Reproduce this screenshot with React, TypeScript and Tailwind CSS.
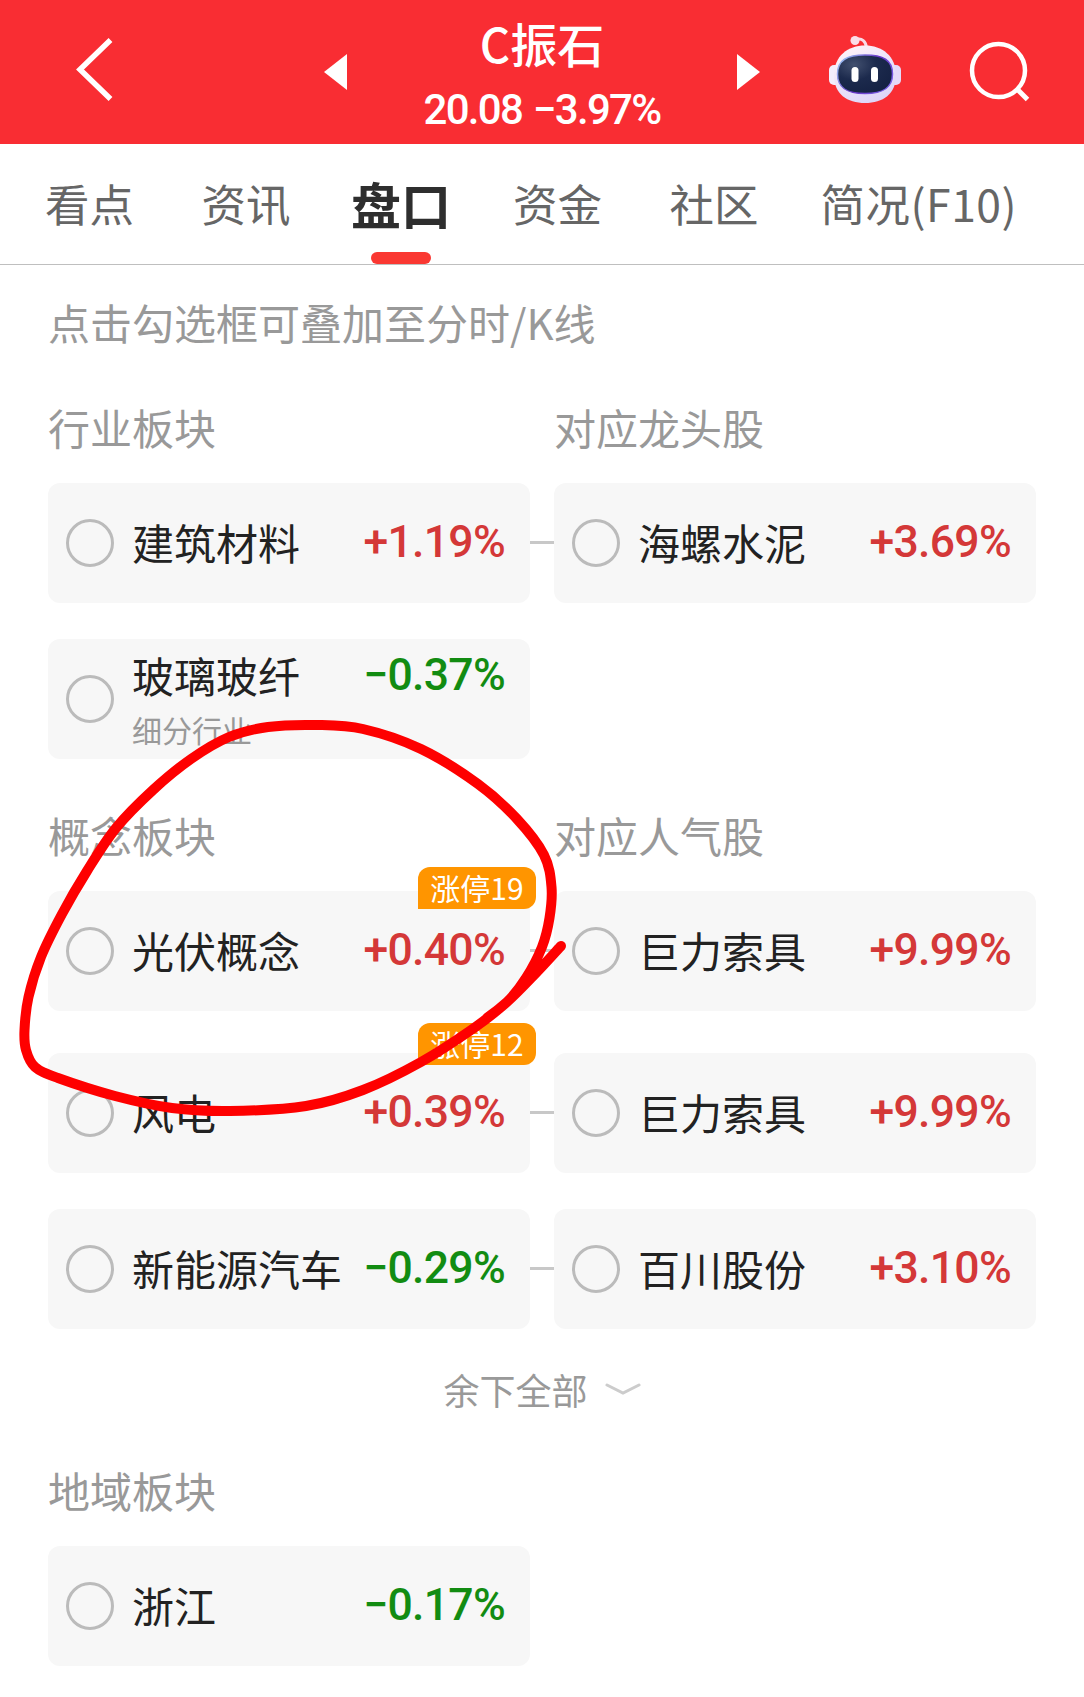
import clsx from 'clsx';

type Quote = {
  name: string;
  change: string;
  note?: string;
  badge?: string;
};

type Row = {
  board: Quote;
  stock?: Quote;
};

const tabs = ['看点', '资讯', '盘口', '资金', '社区', '简况(F10)'];

const industryRows: Row[] = [
  {
    board: { name: '建筑材料', change: '+1.19%' },
    stock: { name: '海螺水泥', change: '+3.69%' },
  },
  { board: { name: '玻璃玻纤', change: '−0.37%', note: '细分行业' } },
];

const conceptRows: Row[] = [
  {
    board: { name: '光伏概念', change: '+0.40%', badge: '涨停19' },
    stock: { name: '巨力索具', change: '+9.99%' },
  },
  {
    board: { name: '风电', change: '+0.39%', badge: '涨停12' },
    stock: { name: '巨力索具', change: '+9.99%' },
  },
  {
    board: { name: '新能源汽车', change: '−0.29%' },
    stock: { name: '百川股份', change: '+3.10%' },
  },
];

const regionRows: Row[] = [{ board: { name: '浙江', change: '−0.17%' } }];

const markerPoints = [
  [561, 946],
  [536, 973],
  [507, 1002],
  [474, 1028],
  [421, 1062],
  [363, 1090],
  [306, 1106],
  [230, 1111],
  [172, 1108],
  [115, 1096],
  [58, 1078],
  [35, 1067],
  [26, 1050],
  [24.5, 1030],
  [28.5, 997],
  [41, 957],
  [62, 914],
  [87, 871],
  [116, 828],
  [153, 790],
  [191, 759],
  [229, 737],
  [268, 727],
  [316, 725],
  [363, 729],
  [421, 749],
  [478, 784],
  [517, 819],
  [544, 855],
  [551.5, 887],
  [549.5, 918],
  [542, 947],
  [526, 978],
  [508, 1001],
  [487, 1018],
];

// Catmull-Rom spline through the points, written as cubic beziers
function smoothPath(points: number[][]) {
  let d = `M${points[0][0]} ${points[0][1]}`;
  for (let i = 0; i < points.length - 1; i++) {
    const p0 = points[i - 1] ?? points[i];
    const p1 = points[i];
    const p2 = points[i + 1];
    const p3 = points[i + 2] ?? p2;
    d += `C${p1[0] + (p2[0] - p0[0]) / 6} ${p1[1] + (p2[1] - p0[1]) / 6}`;
    d += ` ${p2[0] - (p3[0] - p1[0]) / 6} ${p2[1] - (p3[1] - p1[1]) / 6}`;
    d += ` ${p2[0]} ${p2[1]}`;
  }
  return d;
}

function RobotIcon() {
  return (
    <svg width="74" height="68" viewBox="0 0 74 68" fill="none">
      <defs>
        <linearGradient id="shell" x1="20" y1="10" x2="50" y2="68" gradientUnits="userSpaceOnUse">
          <stop stopColor="#fff3f8" />
          <stop offset="0.55" stopColor="#e9e0fa" />
          <stop offset="1" stopColor="#dcd4f8" />
        </linearGradient>
        <linearGradient id="rim" x1="10" y1="20" x2="64" y2="60" gradientUnits="userSpaceOnUse">
          <stop stopColor="#9fd0f5" />
          <stop offset="0.5" stopColor="#6a35c8" />
          <stop offset="1" stopColor="#7c6cf0" />
        </linearGradient>
        <radialGradient id="visor" cx="0.3" cy="0.25" r="0.8">
          <stop stopColor="#42506f" />
          <stop offset="0.5" stopColor="#1c2a4d" />
          <stop offset="1" stopColor="#152244" />
        </radialGradient>
      </defs>
      <path d="M28 3.500C34 2 38 5 38.500 12" stroke="#f9dbe6" strokeWidth="3" />
      <circle cx="27" cy="4.500" r="4.500" fill="#fbdde8" />
      <rect x="1" y="29" width="12" height="20" rx="5" fill="#f3edfd" />
      <rect x="61" y="29" width="12" height="20" rx="5" fill="#e4daf9" />
      <path
        d="M37 9.500C54 9.500 68 20 68 39C68 58 55 67 37 67C19 67 6 58 6 39C6 20 20 9.500 37 9.500Z"
        fill="url(#shell)"
      />
      <path
        d="M37 19C55 19 64.500 24 64.500 38C64.500 52 55 57.500 37 57.500C19 57.500 9.500 52 9.500 38C9.500 24 19 19 37 19Z"
        fill="url(#visor)"
        stroke="url(#rim)"
        strokeWidth="1.500"
      />
      <rect x="23.500" y="31" width="7" height="15" rx="3.500" fill="#fff" />
      <rect x="43" y="31" width="7" height="15" rx="3.500" fill="#fff" />
    </svg>
  );
}

function Header() {
  return (
    <header className="flex h-[144px] items-start bg-[#f92d33] pl-[74px] text-white">
      <svg className="mt-[36px]" width="42" height="68" viewBox="0 0 42 68" fill="none">
        <path d="M36.500 4L6 33.500L36.500 63" stroke="currentColor" strokeWidth="5.500" />
      </svg>
      <svg className="mt-[54px] ml-[208px]" width="23" height="36" viewBox="0 0 23 36">
        <path d="M23 0V36L0 18Z" fill="currentColor" />
      </svg>
      <div className="flex w-[390px] flex-col items-center">
        <h1 className="mt-[10px] text-[47px] leading-[66px] font-medium">C振石</h1>
        <p className="mt-[9px] font-[Roboto] text-[42px] leading-[50px] font-medium tracking-[-1.700px] whitespace-nowrap [word-spacing:2px]">
          20.08 −3.97%
        </p>
      </div>
      <svg className="mt-[54px]" width="23" height="36" viewBox="0 0 23 36">
        <path d="M0 0V36L23 18Z" fill="currentColor" />
      </svg>
      <div className="mt-[36px] ml-[68px]">
        <RobotIcon />
      </div>
      <svg className="mt-[40px] ml-[66px]" width="64" height="64" viewBox="0 0 64 64" fill="none">
        <circle cx="30.500" cy="30.500" r="26.500" stroke="currentColor" strokeWidth="4.500" />
        <path d="M49 49L59.500 59.500" stroke="currentColor" strokeWidth="5" />
      </svg>
    </header>
  );
}

function TabBar() {
  return (
    <nav className="flex h-[121px] items-start border-b border-[#bfbfbf] pl-[45px]">
      {tabs.map((tab) => {
        const active = tab === '盘口';
        return (
          <div
            key={tab}
            className={clsx(
              'flex h-[120px] flex-col items-center justify-between pt-[25px] whitespace-nowrap',
              active
                ? 'mr-[62px] -ml-[7px] text-[50px] font-bold text-[#2e2e2e]'
                : 'text-[44.500px] text-[#666]',
              !active && (tab === '社区' ? 'mr-[62px]' : 'mr-[67.500px]'),
              tab === '简况(F10)' && 'tracking-[0.500px]',
            )}
          >
            <span className="leading-[68px]">{tab}</span>
            {active && <span className="h-3 w-[60px] rounded-full bg-[#fa3832]" />}
          </div>
        );
      })}
    </nav>
  );
}

function QuoteCard({ quote, raised }: { quote: Quote; raised?: boolean }) {
  return (
    <div className="relative flex h-[120px] w-[482px] items-center rounded-xl bg-[#f7f7f7] pr-[25px] pl-[18px]">
      <span className="size-12 shrink-0 rounded-full border-3 border-[#bbb]" />
      <div className="ml-[18px] flex-1 pb-[3px]">
        <div className="flex items-center justify-between">
          <span className="text-[42px] leading-[60px] whitespace-nowrap text-[#222]">{quote.name}</span>
          <span
            className={clsx(
              'font-[Roboto] text-[44.500px] leading-[60px] font-medium tracking-[-0.700px]',
              quote.change.startsWith('+') ? 'text-[#d43838]' : 'text-[#128c12]',
            )}
          >
            {quote.change}
          </span>
        </div>
        {quote.note && <p className="mt-[2px] text-[30px] leading-[44px] text-[#999]">{quote.note}</p>}
      </div>
      {quote.badge && (
        <span
          className={clsx(
            'absolute -right-[6px] h-[42px] w-[118px] rounded-xl rounded-bl-none bg-[#ff9500] text-center text-[30px] leading-[40px] text-white',
            raised ? '-top-[30px]' : '-top-6',
          )}
        >
          {quote.badge}
        </span>
      )}
    </div>
  );
}

function QuoteRow({ row, raised }: { row: Row; raised?: boolean }) {
  return (
    <div className="flex items-center">
      <QuoteCard quote={row.board} raised={raised} />
      {row.stock && (
        <>
          <span className="-mt-[2px] h-[3px] w-6 bg-[#c8c8c8]" />
          <QuoteCard quote={row.stock} />
        </>
      )}
    </div>
  );
}

function SectionTitle({ left, right }: { left: string; right?: string }) {
  return (
    <div className="flex text-[42px] leading-[60px] text-[#999]">
      <h2 className="w-[506px]">{left}</h2>
      {right && <h2>{right}</h2>}
    </div>
  );
}

// Freehand marker stroke around the highlighted concept board
function MarkerCircle() {
  return (
    <svg
      className="pointer-events-none absolute top-0 left-0"
      width="1084"
      height="1697"
      viewBox="0 0 1084 1697"
      fill="none"
      stroke="#fe0000"
      strokeWidth="10"
      strokeLinecap="round"
      strokeLinejoin="round"
    >
      <path d={smoothPath(markerPoints)} />
    </svg>
  );
}

export default function App() {
  return (
    <div className="relative h-[1697px] w-[1084px] overflow-hidden bg-white font-['Noto_Sans_CJK_SC',sans-serif]">
      <Header />
      <TabBar />
      <main className="px-12">
        <p className="mt-[27px] text-[42px] leading-[60px] text-[#999]">点击勾选框可叠加至分时/K线</p>

        <section className="mt-[45px]">
          <SectionTitle left="行业板块" right="对应龙头股" />
          <div className="mt-[26px] flex flex-col gap-9">
            {industryRows.map((row) => (
              <QuoteRow key={row.board.name} row={row} />
            ))}
          </div>
        </section>

        <section className="mt-[46px]">
          <SectionTitle left="概念板块" right="对应人气股" />
          <div className="mt-[26px] flex flex-col">
            {conceptRows.map((row, idx) => (
              <div key={row.board.name} className="mb-9 first:mb-[42px]">
                <QuoteRow row={row} raised={idx > 0} />
              </div>
            ))}
          </div>
        </section>

        <div className="-mt-[2px] flex items-center justify-center gap-[17px] text-[36px] leading-[52px] text-[#999]">
          余下全部
          <svg width="36" height="14" viewBox="0 0 36 14" fill="none">
            <path d="M2 3L18 11L34 3" stroke="#ccc" strokeWidth="3" strokeLinecap="round" />
          </svg>
        </div>

        <section className="mt-[45px]">
          <SectionTitle left="地域板块" />
          <div className="mt-[26px]">
            {regionRows.map((row) => (
              <QuoteRow key={row.board.name} row={row} />
            ))}
          </div>
        </section>
      </main>
      <MarkerCircle />
    </div>
  );
}
